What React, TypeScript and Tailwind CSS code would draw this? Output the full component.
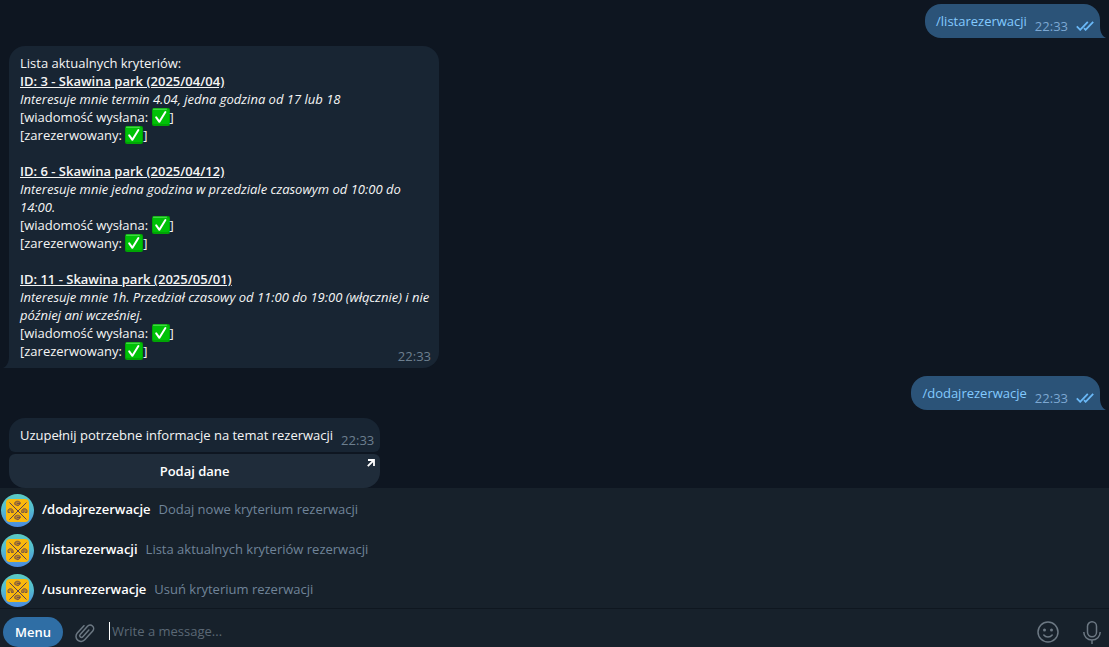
import { useState } from 'react'

const criteria = [
  {
    title: 'ID: 3 - Skawina park (2025/04/04)',
    note: 'Interesuje mnie termin 4.04, jedna godzina od 17 lub 18',
  },
  {
    title: 'ID: 6 - Skawina park (2025/04/12)',
    note: 'Interesuje mnie jedna godzina w przedziale czasowym od 10:00 do 14:00.',
  },
  {
    title: 'ID: 11 - Skawina park (2025/05/01)',
    note: 'Interesuje mnie 1h. Przedział czasowy od 11:00 do 19:00 (włącznie) i nie później ani wcześniej.',
  },
]

const commands = [
  { name: '/dodajrezerwacje', description: 'Dodaj nowe kryterium rezerwacji' },
  { name: '/listarezerwacji', description: 'Lista aktualnych kryteriów rezerwacji' },
  { name: '/usunrezerwacje', description: 'Usuń kryterium rezerwacji' },
]

function CheckEmoji() {
  return (
    <svg viewBox="0 0 18 18" className="inline-block size-[18px] align-top" role="img" aria-label="tak">
      <rect width="18" height="18" rx="2" fill="#00a504" />
      <rect x="1" y="1" width="16" height="15" rx="1.5" fill="#00c107" />
      <path d="M1.5 1.2h13" stroke="#5de35f" strokeWidth="1" strokeLinecap="round" />
      <path d="M4.2 9.4 7.4 13.8 13.4 4" fill="none" stroke="#fff" strokeWidth="2" strokeLinecap="round" strokeLinejoin="round" />
    </svg>
  )
}

function Ticks() {
  return (
    <svg viewBox="0 0 18 10" className="h-[10px] w-[18px]" fill="none" stroke="#6ab8f7" strokeWidth="1.8" aria-hidden="true">
      <path d="M.8 5.4 4.2 8.8 11.8.8" />
      <path d="M8 7.2 9.6 8.8 17.2.8" />
    </svg>
  )
}

// Sent command, right side of the chat
function OutMessage({ text }: { text: string }) {
  return (
    <div className="relative flex h-[34px] items-start self-end rounded-2xl rounded-br-none bg-[#2b5378] pt-2 pr-1.5 pl-[11px]">
      <a href="#" className="text-[#83caff]">{text}</a>
      <time className="mt-[5px] ml-2 text-[#7da8d3]">22:33</time>
      <span className="mt-[9px] ml-2"><Ticks /></span>
      <svg viewBox="0 0 6 12" className="absolute bottom-0 left-full h-3 w-[6px]" aria-hidden="true">
        <path d="M0 0c0 6 2 10 6 12H0z" fill="#2b5378" />
      </svg>
    </div>
  )
}

function Avatar() {
  return (
    <svg viewBox="0 0 33 33" className="size-[33px] shrink-0" aria-hidden="true">
      <defs>
        <linearGradient id="avatar" x1="0" y1="0" x2="0" y2="1">
          <stop offset="0" stopColor="#5bcbc3" />
          <stop offset=".45" stopColor="#55bdcf" />
          <stop offset="1" stopColor="#4b8ae0" />
        </linearGradient>
      </defs>
      <circle cx="16.5" cy="16.5" r="16.5" fill="url(#avatar)" />
      <rect x="5" y="5" width="23" height="23" rx="4" fill="#fbb90c" />
      <path d="m8.5 8.5 17 17m0-17-17 17" fill="none" stroke="#5c4152" strokeWidth="1" />
      {/* four small helmets around the crossing */}
      <g fill="#b98325" stroke="#65484f" strokeWidth=".8">
        <path d="M13.8 10.500c-.6-2.200.8-3.300 2.700-3.300s3.200 1 2.700 2.800l-2.200 1.800zM16 9.500h3" />
        <path d="M13.8 24.500c-.6-2.200.8-3.300 2.700-3.300s3.200 1 2.700 2.800L17 25.800zM16 23.500h3" />
        <path d="M7 18.500c-.6-2.500.5-3.800 2.300-3.800s3.200 1.200 3 3.800h-2v-2M7 18.500h2" />
        <path d="M20.700 18.500c-.4-2.600 1-3.800 2.800-3.800s3 1.200 2.500 3.800h-2M20.700 18.500h2v-2" />
      </g>
    </svg>
  )
}

export default function App() {
  const [message, setMessage] = useState('')

  return (
    <div className="flex min-h-screen flex-col bg-[#0e1621] font-['Open_Sans',sans-serif] text-[13px] leading-[18px] text-[#f5f5f5]">

      {/* Chat */}
      <main className="flex flex-1 flex-col items-start gap-2 px-[9px] pt-1">
        <OutMessage text="/listarezerwacji" />

        <div className="relative w-full max-w-[430px] rounded-2xl rounded-bl-none bg-[#182533] py-2 pr-1 pl-[11px]">
          <p>Lista aktualnych kryteriów:</p>
          <div className="flex flex-col gap-[18px]">
            {criteria.map((c) => (
              <div key={c.title}>
                <h2 className="font-semibold underline">{c.title}</h2>
                <p className="italic">{c.note}</p>
                <p className="h-[18px]">[wiadomość wysłana: <CheckEmoji />]</p>
                <p className="h-[18px]">[zarezerwowany: <CheckEmoji />]</p>
              </div>
            ))}
          </div>
          <time className="absolute right-2 bottom-[3px] text-[#6d7f8f]">22:33</time>
          <svg viewBox="0 0 6 12" className="absolute right-full bottom-0 h-3 w-[6px]" aria-hidden="true">
            <path d="M6 0c0 6-2 10-6 12h6z" fill="#182533" />
          </svg>
        </div>

        <OutMessage text="/dodajrezerwacje" />

        <div className="flex flex-col gap-[2px]">
          <div className="flex h-[34px] rounded-t-2xl rounded-b-md bg-[#182533] pt-2 pr-1.5 pl-[11px]">
            <p>Uzupełnij potrzebne informacje na temat rezerwacji</p>
            <time className="mt-[5px] ml-2 text-[#6d7f8f]">22:33</time>
          </div>
          <button className="relative h-[34px] rounded-t-md rounded-b-2xl bg-[#1f2c3a] font-semibold text-white">
            Podaj dane
            <svg viewBox="0 0 8 8" className="absolute top-[5px] right-[5px] size-2" fill="none" stroke="#fff" strokeWidth="1.8" aria-hidden="true">
              <path d="M1 1h6v6M7 1 .8 7.200" />
            </svg>
          </button>
        </div>
      </main>

      {/* Bot commands */}
      <ul className="bg-[#17212b]">
        {commands.map((c) => (
          <li key={c.name}>
            <button className="flex h-10 w-full items-start pt-1.5 pl-px text-left">
              <Avatar />
              <span className="mt-1.5 ml-2 font-semibold text-white">{c.name}</span>
              <span className="mt-1.5 ml-2 text-[#708499]">{c.description}</span>
            </button>
          </li>
        ))}
      </ul>

      {/* Composer */}
      <footer className="flex h-[39px] items-start border-t border-[#0f1720] bg-[#17212b] pt-2 pr-2 pl-[3px]">
        <button className="h-[30px] rounded-full bg-[#2f6ea5] px-3 font-semibold text-white">Menu</button>
        <button className="mt-[3px] ml-2.5 text-[#6c7883]" aria-label="Attach file">
          <svg viewBox="-12 -12 24 24" className="size-6" fill="none" stroke="currentColor" strokeWidth="1.5" strokeLinecap="round" aria-hidden="true">
            <path transform="rotate(42)" d="M-5-4V6a5 5 0 0 0 10 0V-6a3.500 3.500 0 0 0-7 0V5a1.800 1.800 0 0 0 3.600 0V-4" />
          </svg>
        </button>
        <input
          value={message}
          onChange={(e) => setMessage(e.target.value)}
          placeholder="Write a message..."
          aria-label="Message"
          className="mt-[5px] ml-3 h-[18px] min-w-0 flex-1 border-l border-white pl-0.5 outline-none placeholder:text-[#5b6875]"
        />
        <button className="mt-1 text-[#6c7883]" aria-label="Emoji">
          <svg viewBox="0 0 22 22" className="size-[22px]" fill="none" stroke="currentColor" strokeWidth="1.5" strokeLinecap="round" aria-hidden="true">
            <circle cx="11" cy="11" r="10" />
            <circle cx="7.5" cy="9" r="1.5" fill="currentColor" stroke="none" />
            <circle cx="14.5" cy="9" r="1.5" fill="currentColor" stroke="none" />
            <path d="M6.8 14c2 2.600 6.400 2.600 8.400 0" />
          </svg>
        </button>
        <button className="mt-1 ml-6 text-[#6c7883]" aria-label="Record voice message">
          <svg viewBox="0 0 18 24" className="h-6 w-[18px]" fill="none" stroke="currentColor" strokeWidth="1.5" aria-hidden="true">
            <rect x="4.5" y=".8" width="9" height="15" rx="4.5" />
            <path d="M.8 11c0 4.500 3.500 8 8.200 8s8.200-3.500 8.200-8M9 19v4" />
          </svg>
        </button>
      </footer>
    </div>
  )
}
